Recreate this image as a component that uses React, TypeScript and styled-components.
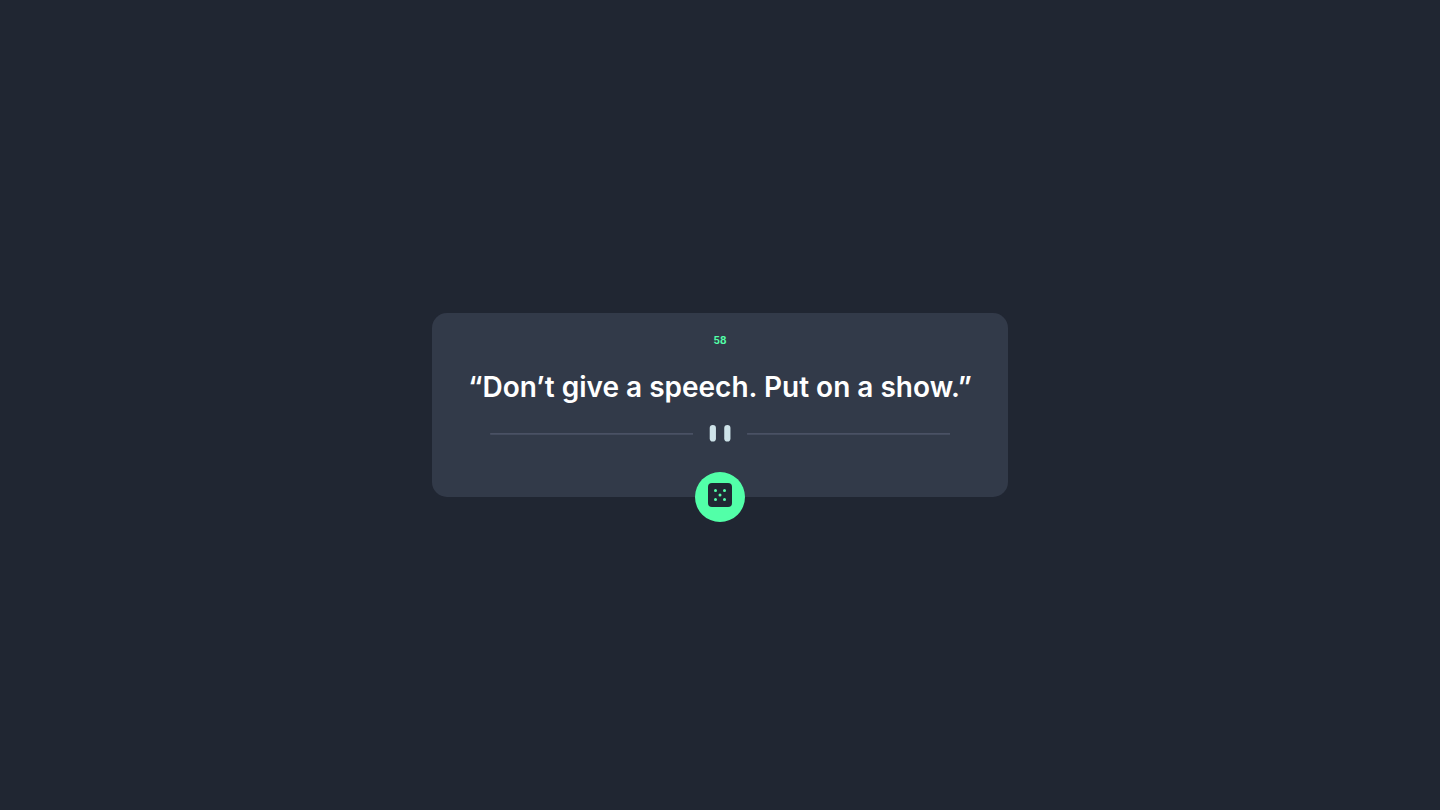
import React, { useState } from "react";
import styled, { createGlobalStyle } from "styled-components";

const GlobalStyle = createGlobalStyle`
  *, *::before, *::after {
    box-sizing: border-box;
  }
  body {
    margin: 0;
    background: #202632;
    font-family: Inter, "Open Sans", sans-serif;
  }
`;

const Page = styled.main`
  min-height: 100vh;
  display: flex;
  align-items: center;
  justify-content: center;
`;

const Card = styled.article`
  width: 40%;
  min-width: 320px;
  display: flex;
  flex-direction: column;
  align-items: center;
  padding-top: 19px;
  border-radius: 15px;
  background: #323a49;
  text-align: center;
`;

const AdviceNumber = styled.h1`
  margin: 0;
  font-size: 10px;
  line-height: 16px;
  font-weight: 700;
  color: #52ffa8;
`;

const Quote = styled.p`
  margin: 21px 0 20px;
  padding: 0 16px;
  font-size: 28px;
  line-height: 36px;
  font-weight: 600;
  color: #ffffff;
`;

const Divider = styled.svg`
  display: block;
  width: 80%;
  height: auto;
`;

const DiceButton = styled.button`
  display: flex;
  justify-content: center;
  width: 50px;
  height: 50px;
  margin: 30px 0 -25px;
  padding: 11px 0 0;
  border: 0;
  border-radius: 50%;
  background: #52ffa8;
  cursor: pointer;
`;

const advice = [
  { id: 58, text: "Don’t give a speech. Put on a show." },
  { id: 117, text: "It is easy to sit up and take notice." },
];

export default function App() {
  const [index, setIndex] = useState(0);
  const current = advice[index];

  return (
    <>
      <GlobalStyle />
      <Page>
        <Card>
          <AdviceNumber>{current.id}</AdviceNumber>
          <Quote>“{current.text}”</Quote>
          <Divider viewBox="0 0 444 16" aria-hidden="true">
            <path fill="#4a5164" d="M0 7.7h195.6v1.7H0zM247.7 7.7H444v1.7H247.7z" />
            <g fill="#cee3e9">
              <rect x="211.7" width="6" height="16" rx="3" />
              <rect x="225.7" width="6" height="16" rx="3" />
            </g>
          </Divider>
          <DiceButton
            type="button"
            aria-label="New advice"
            onClick={() => setIndex((index + 1) % advice.length)}
          >
            <svg width="24" height="24" viewBox="0 0 24 24" aria-hidden="true">
              <rect width="24" height="24" rx="4" fill="#202733" />
              <g fill="#52ffa8">
                <circle cx="7.5" cy="7.5" r="1.5" />
                <circle cx="16.5" cy="7.5" r="1.5" />
                <circle cx="12" cy="12" r="1.5" />
                <circle cx="7.5" cy="16.5" r="1.5" />
                <circle cx="16.5" cy="16.5" r="1.5" />
              </g>
            </svg>
          </DiceButton>
        </Card>
      </Page>
    </>
  );
}
